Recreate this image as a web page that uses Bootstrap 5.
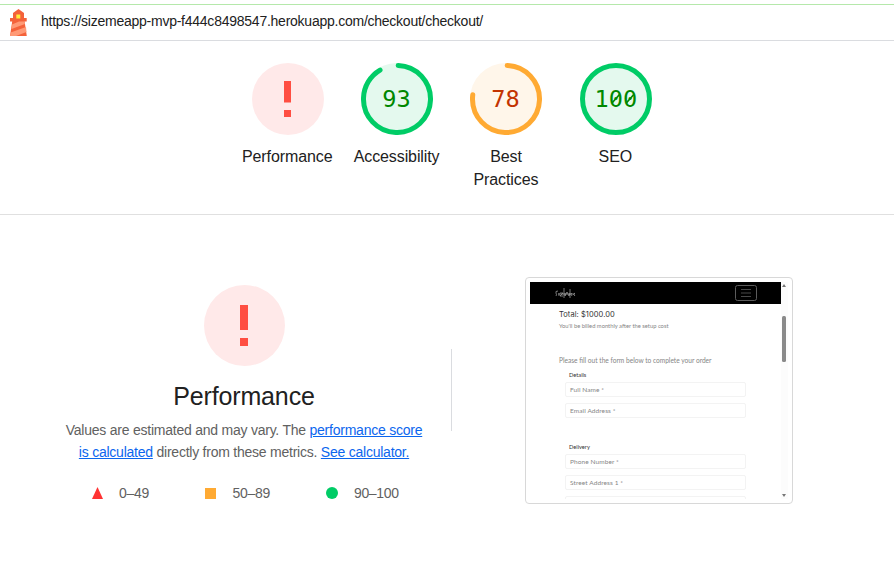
<!DOCTYPE html>
<html lang="en">
<head>
<meta charset="utf-8">
<meta name="viewport" content="width=device-width, initial-scale=1">
<title>Lighthouse report</title>
<link href="https://cdn.jsdelivr.net/npm/bootstrap@5.3.0/dist/css/bootstrap.min.css" rel="stylesheet">
<style>
body{font-family:"Liberation Sans",Arial,sans-serif;color:#212121;height:577px;overflow:hidden;background:#fff}
svg{display:block;flex:none}
.topbar{border-top:1px solid #b5e8ab;border-bottom:1px solid #dadce0;margin-top:4px;height:37px}
.topbar svg{margin-left:9px}
.site-url{font-size:14px;line-height:20px;letter-spacing:-.245px;margin-left:12px;margin-top:-4px;white-space:nowrap}
.scores{height:174px;padding-top:22px;border-bottom:1px solid #e0e0e0;padding-left:233px}
.gauge{width:109.4px;font-size:16px;line-height:23px;text-align:center}
.gauge .caption{margin-top:10px;letter-spacing:-.1px;padding-right:1px}
.gauge text{font-family:"DejaVu Sans Mono",monospace;font-size:23.6px;text-anchor:middle}
.detail{height:362px}
.summary{width:451px;padding-left:37px;padding-top:70px}
.summary h1{font-size:25px;line-height:32px;font-weight:400;letter-spacing:-.15px;margin:13px 0 7px}
.summary p{font-size:14px;line-height:22px;letter-spacing:-.235px;color:#616161;width:370px}
.summary a{color:#0b66ee}
.legend{font-size:14px;line-height:20px;letter-spacing:-.3px;color:#616161;margin-top:20px;width:100%;padding-left:55px}
.legend>div{white-space:nowrap}
.legend span{margin-left:16px}
.item-b{margin-left:56.500px}
.item-c{margin-left:56px}
.rule{width:1px;height:82px;margin-top:134px;background:#dadce0}
.shot{width:268px;height:227px;margin:62px 0 0 73px;padding:4px;border:1px solid #d8d8d8;border-radius:4px;background:#fff}
.mini{width:251px;height:217px;overflow:hidden;font-family:Lato,sans-serif;color:#858585}
.mini-nav{height:22px;background:#000;padding:0 24px 0 25px}
.mini-body{padding:6px 35px 0 29px}
.mini-total{font-family:Inter,sans-serif;font-size:7.5px;letter-spacing:.06px;line-height:10px;color:#333}
.mini-note{font-size:5.8px;line-height:8px;margin-top:2px}
.mini-lead{font-size:6.6px;line-height:10px;margin-top:25px}
.mini-head{font-size:5.7px;line-height:8px;color:#333;margin:6px 0 3px 10px}
.field{height:15px;border:1px solid #f3f3f3;border-radius:2px;margin:0 0 6px 6px;padding-left:4px;font-size:6.5px;letter-spacing:.1px;line-height:13px}
.gap-head{margin-top:25px;margin-bottom:2.500px}
.scroller{background:#fcfcfc}
</style>
<script src="https://cdn.jsdelivr.net/npm/bootstrap@5.3.0/dist/js/bootstrap.bundle.min.js"></script>
</head>
<body>
<header class="topbar d-flex align-items-center">
  <svg width="20" height="28" viewBox="0 0 20 28">
    <path d="M9.500 0 15 4v5h2.700v3.500H15.600L17.800 27H1l2.200-14.500H1V9h3V4z" fill="#f4623a"/>
    <path d="M3 15.500 10 12.500H15.700L16 15 2.500 20z M1.700 23.500 17 18 17.500 23 7 27H1z" fill="#ff9a76"/>
    <path d="M7.300 5.500h4v4h-4z" fill="#ffeb3b"/>
  </svg>
  <div class="site-url">https://sizemeapp-mvp-f444c8498547.herokuapp.com/checkout/checkout/</div>
</header>

<section class="scores d-flex">
  <div class="gauge d-flex flex-column align-items-center">
    <svg width="72" height="72" viewBox="0 0 72 72"><circle cx="36" cy="36" r="36" fill="#ffe9e9"/><path d="M32 18h7v21.500h-7zM32 47h7v7h-7z" fill="#ff4e42"/></svg>
    <div class="caption">Performance</div>
  </div>
  <div class="gauge d-flex flex-column align-items-center">
    <svg width="72" height="72" viewBox="0 0 72 72"><circle cx="36" cy="36" r="36" fill="#e4f9ee"/><circle cx="36" cy="36" r="33.500" fill="none" stroke="#0c6" stroke-width="5" stroke-linecap="round" pathLength="100" stroke-dasharray="91 100" transform="rotate(-88 36 36)"/><text x="35.500" y="44" fill="#080">93</text></svg>
    <div class="caption">Accessibility</div>
  </div>
  <div class="gauge d-flex flex-column align-items-center">
    <svg width="72" height="72" viewBox="0 0 72 72"><circle cx="36" cy="36" r="36" fill="#fff6ea"/><circle cx="36" cy="36" r="33.500" fill="none" stroke="#fa3" stroke-width="5" stroke-linecap="round" pathLength="100" stroke-dasharray="76.500 100" transform="rotate(-88 36 36)"/><text x="35.500" y="44" fill="#c33300">78</text></svg>
    <div class="caption">Best<br>Practices</div>
  </div>
  <div class="gauge d-flex flex-column align-items-center">
    <svg width="72" height="72" viewBox="0 0 72 72"><circle cx="36" cy="36" r="33.500" fill="#e4f9ee" stroke="#0c6" stroke-width="5"/><text x="35.800" y="44" fill="#080">100</text><path d="M32 40 39.500 31.500M46.300 40 53.800 31.500" stroke="#080" stroke-width="1.700"/></svg>
    <div class="caption">SEO</div>
  </div>
</section>

<main class="detail d-flex">
  <section class="summary d-flex flex-column align-items-center text-center">
    <svg width="82" height="82" viewBox="0 0 82 82"><circle cx="41.500" cy="40.500" r="40.500" fill="#ffe9e9"/><path d="M37 20h8v25h-8zM37 53h8v8h-8z" fill="#ff4e42"/></svg>
    <h1>Performance</h1>
    <p class="mb-0">Values are estimated and may vary. The <a href="#">performance score<br>is calculated</a> directly from these metrics. <a href="#">See calculator.</a></p>
    <div class="legend d-flex">
      <div class="d-flex align-items-center"><svg width="11" height="12"><path d="M5.500 0 11 12H0z" fill="#f33"/></svg><span>0–49</span></div>
      <div class="d-flex align-items-center item-b"><svg width="11" height="11"><path d="M0 0h11v11H0z" fill="#fa3"/></svg><span>50–89</span></div>
      <div class="d-flex align-items-center item-c"><svg width="12" height="12"><circle cx="6" cy="6" r="6" fill="#0c6"/></svg><span>90–100</span></div>
    </div>
  </section>
  <div class="rule"></div>
  <div class="shot d-flex">
    <div class="mini">
      <div class="mini-nav d-flex align-items-center justify-content-between">
        <svg width="21" height="14" fill="none" stroke="#aaa" stroke-width=".7"><path d="M3 5Q0 5 1 7T1 10M4 7v3M5 7h3l-3 3h3M9 2v10M10 7v3l2-4 2 4 1-3M15 3v9M17 7q-2 1 0 3M20 7q-3 1 0 3M3 8h17"/></svg>
        <svg width="22" height="16" fill="none" stroke="#5c5c5c"><rect x=".5" y=".5" width="21" height="15" rx="2"/><path d="M6 4.500h10M6 8h10M6 11.500h10" stroke="#484848"/></svg>
      </div>
      <div class="mini-body">
        <div class="mini-total">Total: $1000.00</div>
        <div class="mini-note">You'll be billed monthly after the setup cost</div>
        <div class="mini-lead">Please fill out the form below to complete your order</div>
        <div class="mini-head">Details</div>
        <div class="field">Full Name *</div>
        <div class="field">Email Address *</div>
        <div class="mini-head gap-head">Delivery</div>
        <div class="field">Phone Number *</div>
        <div class="field">Street Address 1 *</div>
        <div class="field"></div>
      </div>
    </div>
    <svg class="scroller" width="7" height="217"><path d="M1 5 3 2 5 5zM1 212h4l-2 3z" fill="#777"/><rect x="1" y="34" width="4" height="46" rx="1.500" fill="#8a8a8a"/></svg>
  </div>
</main>
</body>
</html>
